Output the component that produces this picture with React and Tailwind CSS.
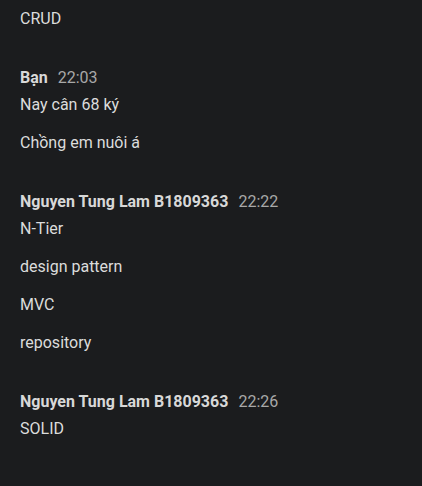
import React from 'react';

const groups = [
  { name: null, time: null, messages: ['CRUD'] },
  { name: 'Bạn', time: '22:03', messages: ['Nay cân 68 ký', 'Chồng em nuôi á'] },
  { name: 'Nguyen Tung Lam B1809363', time: '22:22', messages: ['N-Tier', 'design pattern', 'MVC', 'repository'] },
  { name: 'Nguyen Tung Lam B1809363', time: '22:26', messages: ['SOLID'] },
];

const App = () => {
  return (
    <div className="min-h-screen w-full bg-[#1b1c1e] text-[#dcdcdc] px-5 pt-[8px] font-['Roboto',sans-serif] text-[16px]">
      <div className="flex flex-col gap-[37px]">
        {groups.map((g, i) => (
          <div key={i} className="flex flex-col">
            {g.name && (
              <div className="flex items-baseline gap-[10px] leading-[22px] mb-[5px]">
                <span className="font-bold text-[#d8d8d8]">{g.name}</span>
                <span className="text-[#a8a8a8]">{g.time}</span>
              </div>
            )}
            <div className="flex flex-col gap-[16px]">
              {g.messages.map((m, j) => (
                <div key={j} className="leading-[22px]">{m}</div>
              ))}
            </div>
          </div>
        ))}
      </div>
    </div>
  );
};

export default App;
